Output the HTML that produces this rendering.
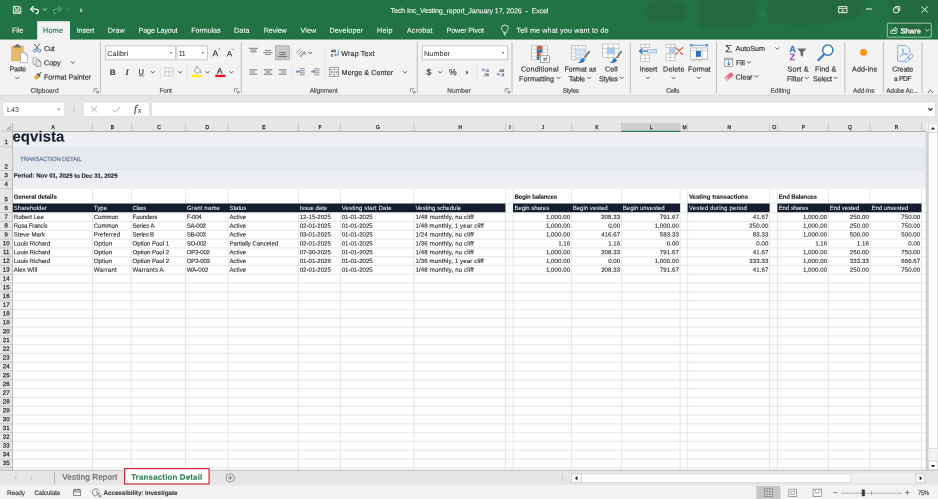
<!DOCTYPE html>
<html lang="en">
<head>
<meta charset="utf-8">
<title>Tech Inc_Vesting_report_January 17, 2026 - Excel</title>
<style>
html,body{margin:0;padding:0;background:#fff;}
body{width:938px;height:499px;overflow:hidden;position:relative;font-family:'Liberation Sans',sans-serif;color:#444;}
#app{position:absolute;left:0;top:0;width:938px;height:499px;overflow:hidden;background:#fff;}
#shapes{position:absolute;left:0;top:0;}
#labels{position:absolute;left:0;top:0;width:938px;height:499px;will-change:transform;}
#app span{position:absolute;left:0;top:0;white-space:pre;line-height:1;transform-origin:0 0;-webkit-text-stroke:0.2px;}
</style>
</head>
<body>
<div id="app">
<svg id="shapes" width="938" height="499" viewBox="0 0 938 499">
<!-- window chrome backgrounds -->
<rect x="0" y="0" width="938" height="39.6" fill="#217346"/>
<defs><filter id="bl" x="-20%" y="-40%" width="140%" height="180%"><feGaussianBlur stdDeviation="1.3"/></filter><clipPath id="tc"><rect x="0" y="0" width="938" height="39.6"/></clipPath></defs>
<g clip-path="url(#tc)"><g filter="url(#bl)" fill="#25673f" opacity="0.78"><rect x="646" y="1.5" width="40" height="20.5" rx="8"/><rect x="697" y="-4" width="59" height="33" rx="9"/><path d="M768 -3H866Q868 13 852 19Q830 26 800 25.5Q776 26 768 21Z"/><circle cx="916" cy="7" r="27"/></g><circle cx="762" cy="13" r="3.5" fill="#2b8251" opacity="0.6" filter="url(#bl)"/></g>
<rect x="0" y="38.7" width="938" height="0.9" fill="#1c6a3e"/>
<rect x="0" y="39.6" width="938" height="55.1" fill="#f3f3f3"/>
<rect x="0" y="94.7" width="938" height="28.2" fill="#e6e6e6"/>
<linearGradient id="sh" x1="0" y1="0" x2="0" y2="1"><stop offset="0" stop-color="#d9d9d9"/><stop offset="1" stop-color="#e6e6e6"/></linearGradient>
<rect x="0" y="94.7" width="938" height="2.6" fill="url(#sh)"/>
<rect x="0" y="122.9" width="938" height="347.4" fill="#fff"/>
<!-- worksheet -->
<rect x="12.5" y="131.3" width="913.8" height="57.5" fill="#edeff3"/>
<rect x="12.5" y="146.9" width="913.8" height="23.7" fill="#e5e8ec"/>
<rect x="12.5" y="202.75" width="913.8" height="1.3" fill="#ebebeb"/>
<rect x="12.5" y="212.05" width="913.8" height="1.3" fill="#ebebeb"/>
<rect x="12.5" y="220.85" width="913.8" height="1.3" fill="#ebebeb"/>
<rect x="12.5" y="229.64" width="913.8" height="1.3" fill="#ebebeb"/>
<rect x="12.5" y="238.44" width="913.8" height="1.3" fill="#ebebeb"/>
<rect x="12.5" y="247.24" width="913.8" height="1.3" fill="#ebebeb"/>
<rect x="12.5" y="256.04" width="913.8" height="1.3" fill="#ebebeb"/>
<rect x="12.5" y="264.83" width="913.8" height="1.3" fill="#ebebeb"/>
<rect x="12.5" y="273.63" width="913.8" height="1.3" fill="#ebebeb"/>
<rect x="12.5" y="282.43" width="913.8" height="1.3" fill="#ebebeb"/>
<rect x="12.5" y="291.22" width="913.8" height="1.3" fill="#ebebeb"/>
<rect x="12.5" y="300.02" width="913.8" height="1.3" fill="#ebebeb"/>
<rect x="12.5" y="308.82" width="913.8" height="1.3" fill="#ebebeb"/>
<rect x="12.5" y="317.61" width="913.8" height="1.3" fill="#ebebeb"/>
<rect x="12.5" y="326.41" width="913.8" height="1.3" fill="#ebebeb"/>
<rect x="12.5" y="335.21" width="913.8" height="1.3" fill="#ebebeb"/>
<rect x="12.5" y="344" width="913.8" height="1.3" fill="#ebebeb"/>
<rect x="12.5" y="352.8" width="913.8" height="1.3" fill="#ebebeb"/>
<rect x="12.5" y="361.6" width="913.8" height="1.3" fill="#ebebeb"/>
<rect x="12.5" y="370.4" width="913.8" height="1.3" fill="#ebebeb"/>
<rect x="12.5" y="379.19" width="913.8" height="1.3" fill="#ebebeb"/>
<rect x="12.5" y="387.99" width="913.8" height="1.3" fill="#ebebeb"/>
<rect x="12.5" y="396.79" width="913.8" height="1.3" fill="#ebebeb"/>
<rect x="12.5" y="405.58" width="913.8" height="1.3" fill="#ebebeb"/>
<rect x="12.5" y="414.38" width="913.8" height="1.3" fill="#ebebeb"/>
<rect x="12.5" y="423.18" width="913.8" height="1.3" fill="#ebebeb"/>
<rect x="12.5" y="431.98" width="913.8" height="1.3" fill="#ebebeb"/>
<rect x="12.5" y="440.77" width="913.8" height="1.3" fill="#ebebeb"/>
<rect x="12.5" y="449.57" width="913.8" height="1.3" fill="#ebebeb"/>
<rect x="12.5" y="458.37" width="913.8" height="1.3" fill="#ebebeb"/>
<rect x="12.5" y="467.16" width="913.8" height="1.3" fill="#ebebeb"/>
<rect x="92" y="188.8" width="1" height="281.5" fill="#e6e6e6"/>
<rect x="130.8" y="188.8" width="1" height="281.5" fill="#e6e6e6"/>
<rect x="184.9" y="188.8" width="1" height="281.5" fill="#e6e6e6"/>
<rect x="227.6" y="188.8" width="1" height="281.5" fill="#e6e6e6"/>
<rect x="297.9" y="188.8" width="1" height="281.5" fill="#e6e6e6"/>
<rect x="339.9" y="188.8" width="1" height="281.5" fill="#e6e6e6"/>
<rect x="413.6" y="188.8" width="1" height="281.5" fill="#e6e6e6"/>
<rect x="504.9" y="188.8" width="1" height="281.5" fill="#e6e6e6"/>
<rect x="512.6" y="188.8" width="1" height="281.5" fill="#e6e6e6"/>
<rect x="570.9" y="188.8" width="1" height="281.5" fill="#e6e6e6"/>
<rect x="620.9" y="188.8" width="1" height="281.5" fill="#e6e6e6"/>
<rect x="679.6" y="188.8" width="1" height="281.5" fill="#e6e6e6"/>
<rect x="687.1" y="188.8" width="1" height="281.5" fill="#e6e6e6"/>
<rect x="769.1" y="188.8" width="1" height="281.5" fill="#e6e6e6"/>
<rect x="776.9" y="188.8" width="1" height="281.5" fill="#e6e6e6"/>
<rect x="827.9" y="188.8" width="1" height="281.5" fill="#e6e6e6"/>
<rect x="869.6" y="188.8" width="1" height="281.5" fill="#e6e6e6"/>
<rect x="921" y="188.8" width="1" height="281.5" fill="#e6e6e6"/>
<rect x="12.5" y="203.55" width="492.9" height="8.65" fill="#141c2e"/>
<rect x="513.1" y="203.55" width="167" height="8.65" fill="#141c2e"/>
<rect x="687.6" y="203.55" width="82" height="8.65" fill="#141c2e"/>
<rect x="777.4" y="203.55" width="144.1" height="8.65" fill="#141c2e"/>
<rect x="0" y="122.9" width="926.3" height="8.4" fill="#e6e6e6"/>
<rect x="621.4" y="122.9" width="58.7" height="8.4" fill="#d0d0d0"/>
<rect x="0" y="131" width="926.3" height="1" fill="#ababab"/>
<rect x="621.4" y="130.8" width="58.7" height="1.2" fill="#2a7a4d"/>
<rect x="92.2" y="122.7" width="0.6" height="8.6" fill="#bcbcbc"/>
<rect x="131" y="122.7" width="0.6" height="8.6" fill="#bcbcbc"/>
<rect x="185.1" y="122.7" width="0.6" height="8.6" fill="#bcbcbc"/>
<rect x="227.8" y="122.7" width="0.6" height="8.6" fill="#bcbcbc"/>
<rect x="298.1" y="122.7" width="0.6" height="8.6" fill="#bcbcbc"/>
<rect x="340.1" y="122.7" width="0.6" height="8.6" fill="#bcbcbc"/>
<rect x="413.8" y="122.7" width="0.6" height="8.6" fill="#bcbcbc"/>
<rect x="505.1" y="122.7" width="0.6" height="8.6" fill="#bcbcbc"/>
<rect x="512.8" y="122.7" width="0.6" height="8.6" fill="#bcbcbc"/>
<rect x="571.1" y="122.7" width="0.6" height="8.6" fill="#bcbcbc"/>
<rect x="621.1" y="122.7" width="0.6" height="8.6" fill="#bcbcbc"/>
<rect x="679.8" y="122.7" width="0.6" height="8.6" fill="#bcbcbc"/>
<rect x="687.3" y="122.7" width="0.6" height="8.6" fill="#bcbcbc"/>
<rect x="769.3" y="122.7" width="0.6" height="8.6" fill="#bcbcbc"/>
<rect x="777.1" y="122.7" width="0.6" height="8.6" fill="#bcbcbc"/>
<rect x="828.1" y="122.7" width="0.6" height="8.6" fill="#bcbcbc"/>
<rect x="869.8" y="122.7" width="0.6" height="8.6" fill="#bcbcbc"/>
<rect x="921.2" y="122.7" width="0.6" height="8.6" fill="#bcbcbc"/>
<path d="M10.9 124.9V130.2H5.4Z" fill="#b9b9b9"/>
<rect x="0" y="131.3" width="12.5" height="339" fill="#e6e6e6"/>
<rect x="12.05" y="122.9" width="0.7" height="347.4" fill="#a8a8a8"/>
<rect x="0" y="146.6" width="12.5" height="0.6" fill="#b5b5b5"/>
<rect x="0" y="170.3" width="12.5" height="0.6" fill="#b5b5b5"/>
<rect x="0" y="179.6" width="12.5" height="0.6" fill="#b5b5b5"/>
<rect x="0" y="188.5" width="12.5" height="0.6" fill="#b5b5b5"/>
<rect x="0" y="203.1" width="12.5" height="0.6" fill="#b5b5b5"/>
<rect x="0" y="212.4" width="12.5" height="0.6" fill="#b5b5b5"/>
<rect x="0" y="221.2" width="12.5" height="0.6" fill="#b5b5b5"/>
<rect x="0" y="229.99" width="12.5" height="0.6" fill="#b5b5b5"/>
<rect x="0" y="238.79" width="12.5" height="0.6" fill="#b5b5b5"/>
<rect x="0" y="247.59" width="12.5" height="0.6" fill="#b5b5b5"/>
<rect x="0" y="256.38" width="12.5" height="0.6" fill="#b5b5b5"/>
<rect x="0" y="265.18" width="12.5" height="0.6" fill="#b5b5b5"/>
<rect x="0" y="273.98" width="12.5" height="0.6" fill="#b5b5b5"/>
<rect x="0" y="282.78" width="12.5" height="0.6" fill="#b5b5b5"/>
<rect x="0" y="291.57" width="12.5" height="0.6" fill="#b5b5b5"/>
<rect x="0" y="300.37" width="12.5" height="0.6" fill="#b5b5b5"/>
<rect x="0" y="309.17" width="12.5" height="0.6" fill="#b5b5b5"/>
<rect x="0" y="317.96" width="12.5" height="0.6" fill="#b5b5b5"/>
<rect x="0" y="326.76" width="12.5" height="0.6" fill="#b5b5b5"/>
<rect x="0" y="335.56" width="12.5" height="0.6" fill="#b5b5b5"/>
<rect x="0" y="344.35" width="12.5" height="0.6" fill="#b5b5b5"/>
<rect x="0" y="353.15" width="12.5" height="0.6" fill="#b5b5b5"/>
<rect x="0" y="361.95" width="12.5" height="0.6" fill="#b5b5b5"/>
<rect x="0" y="370.75" width="12.5" height="0.6" fill="#b5b5b5"/>
<rect x="0" y="379.54" width="12.5" height="0.6" fill="#b5b5b5"/>
<rect x="0" y="388.34" width="12.5" height="0.6" fill="#b5b5b5"/>
<rect x="0" y="397.14" width="12.5" height="0.6" fill="#b5b5b5"/>
<rect x="0" y="405.93" width="12.5" height="0.6" fill="#b5b5b5"/>
<rect x="0" y="414.73" width="12.5" height="0.6" fill="#b5b5b5"/>
<rect x="0" y="423.53" width="12.5" height="0.6" fill="#b5b5b5"/>
<rect x="0" y="432.32" width="12.5" height="0.6" fill="#b5b5b5"/>
<rect x="0" y="441.12" width="12.5" height="0.6" fill="#b5b5b5"/>
<rect x="0" y="449.92" width="12.5" height="0.6" fill="#b5b5b5"/>
<rect x="0" y="458.72" width="12.5" height="0.6" fill="#b5b5b5"/>
<rect x="0" y="467.51" width="12.5" height="0.6" fill="#b5b5b5"/>
<!-- scrollbars -->
<rect x="926.3" y="122.9" width="11.7" height="347.4" fill="#f0f0f0"/>
<rect x="925.7" y="131.3" width="2.5" height="339" fill="#d0d0d0"/>
<rect x="928.3" y="132.4" width="9.1" height="316.3" fill="#fff" stroke="#c9c9c9" stroke-width="0.6"/>
<rect x="928.6" y="123.9" width="8.8" height="8.3" fill="#fff" stroke="#c4c4c4" stroke-width="0.6"/>
<path d="M930.8 129.4L933 126.9L935.2 129.4Z" fill="#1e1e1e"/>
<rect x="928.6" y="461.1" width="8.8" height="8.9" fill="#fff" stroke="#c4c4c4" stroke-width="0.6"/>
<path d="M930.8 464.9L933 467.4L935.2 464.9Z" fill="#1e1e1e"/>
<rect x="0" y="469.9" width="938" height="0.8" fill="#bdbdbd"/>
<!-- title bar -->
<!-- ribbon tabs -->
<rect x="37.2" y="21.2" width="32.8" height="18.9" fill="#f3f3f3"/>
<rect x="887.3" y="23.2" width="44" height="14" fill="none" rx="0.6" stroke="#bcd6c6" stroke-width="0.8"/>
<!-- ribbon -->
<rect x="99.9" y="41.9" width="1" height="51.2" fill="#bebebe"/>
<rect x="240.8" y="41.9" width="1" height="51.2" fill="#bebebe"/>
<rect x="416.8" y="41.9" width="1" height="51.2" fill="#bebebe"/>
<rect x="511.5" y="41.9" width="1" height="51.2" fill="#bebebe"/>
<rect x="629.8" y="41.9" width="1" height="51.2" fill="#bebebe"/>
<rect x="716" y="41.9" width="1" height="51.2" fill="#bebebe"/>
<rect x="844.3" y="41.9" width="1" height="51.2" fill="#bebebe"/>
<rect x="882.8" y="41.9" width="1" height="51.2" fill="#bebebe"/>
<rect x="921.5" y="41.9" width="1" height="51.2" fill="#bebebe"/>
<rect x="159.95" y="65.6" width="0.7" height="13.2" fill="#dcdcdc"/>
<rect x="187.15" y="65.6" width="0.7" height="13.2" fill="#dcdcdc"/>
<rect x="291.55" y="46" width="0.7" height="13.5" fill="#dcdcdc"/>
<rect x="291.55" y="65.6" width="0.7" height="13.2" fill="#dcdcdc"/>
<rect x="324.65" y="45.6" width="0.7" height="33.2" fill="#dcdcdc"/>
<rect x="476.15" y="65.6" width="0.7" height="13.2" fill="#dcdcdc"/>
<rect x="105.6" y="45.9" width="69.8" height="13.85" fill="#fff" stroke="#bdbdbd" stroke-width="0.85"/>
<rect x="176.9" y="45.9" width="30.6" height="13.85" fill="#fff" stroke="#bdbdbd" stroke-width="0.85"/>
<rect x="422.25" y="45.9" width="85.5" height="13.85" fill="#fff" stroke="#bdbdbd" stroke-width="0.85"/>
<rect x="138.7" y="75.6" width="5.6" height="0.6" fill="#3a3a3a"/>
<!-- formula bar -->
<rect x="3.1" y="102.1" width="61.6" height="14.2" fill="#fff" stroke="#d6d6d6" stroke-width="0.6"/>
<rect x="83.3" y="102.1" width="66" height="14.2" fill="#fff" stroke="#d6d6d6" stroke-width="0.6"/>
<rect x="151.3" y="102.1" width="784" height="14.2" fill="#fff" stroke="#d6d6d6" stroke-width="0.6"/>
<!-- sheet tabs -->
<rect x="0" y="470.3" width="938" height="15.4" fill="#e6e6e6"/>
<rect x="0" y="469.9" width="938" height="0.8" fill="#bdbdbd"/>
<rect x="54.25" y="472" width="0.7" height="11.6" fill="#9e9e9e"/>
<rect x="124.65" y="468.65" width="84.4" height="15.3" fill="#fff" stroke="#cf1f2e" stroke-width="1.15"/>
<rect x="581.2" y="473.6" width="334.7" height="9.2" fill="#f0f0f0"/>
<rect x="571.6" y="473.9" width="9.6" height="8.6" fill="#fff" stroke="#b9b9b9" stroke-width="0.6"/>
<rect x="581.6" y="473.9" width="269.2" height="8.6" fill="#fff" stroke="#c9c9c9" stroke-width="0.6"/>
<rect x="915.9" y="473.9" width="8.8" height="8.6" fill="#fff" stroke="#b9b9b9" stroke-width="0.6"/>
<path d="M577.5 475.9L574.9 478.2L577.5 480.5Z" fill="#1e1e1e"/>
<path d="M919.6 475.9L922.2 478.2L919.6 480.5Z" fill="#1e1e1e"/>
<!-- status bar -->
<rect x="0" y="485.7" width="938" height="13.3" fill="#f3f3f3"/>
<rect x="756.3" y="486" width="24.1" height="13" fill="#c6c6c6"/>
<!-- icons -->
<g fill="none" stroke="#fff" stroke-width="0.9" stroke-linejoin="round"><path d="M13.4 6.4H19.6L20.8 7.6V13.3H13.4Z"/><path d="M15.1 6.5V9.1H19V6.5"/><path d="M15.1 13.2V10.9H19.2V13.2"/><path d="M16.3 12.1H18" stroke-width="0.7"/></g>
<g fill="none" stroke="#fff" stroke-width="1.15" stroke-linecap="round" stroke-linejoin="round"><path d="M33.3 6.5L30.6 9.1L33.3 11.6"/><path d="M30.9 9.1H35.6C39.2 9.1 39.4 13.4 35.9 13.5"/></g>
<path d="M43.30 8.80L44.80 10.40L46.30 8.80" fill="none" stroke="#fff" stroke-width="0.8" stroke-linecap="round" stroke-linejoin="round"/>
<g fill="none" stroke="#5e9b79" stroke-width="1.15" stroke-linecap="round" stroke-linejoin="round"><path d="M58.7 6.5L61.4 9.1L58.7 11.6"/><path d="M61.1 9.1H56.4C52.8 9.1 52.6 13.4 56.1 13.5"/></g>
<path d="M66.90 8.80L68.40 10.40L69.90 8.80" fill="none" stroke="#5e9b79" stroke-width="0.8" stroke-linecap="round" stroke-linejoin="round"/>
<path d="M79.9 9.2H82.3" fill="none" stroke="#fff" stroke-width="0.7"/>
<path d="M79.7 10.5H82.5L81.1 12.3Z" fill="#fff"/>
<g fill="none" stroke="#fff" stroke-width="0.9"><rect x="838.7" y="6.7" width="8.2" height="6"/><path d="M838.7 8.5H846.9" stroke-width="0.7"/><path d="M841.2 11.2L842.8 9.7L844.4 11.2M842.8 9.9V12.6" stroke-width="0.7"/><path d="M865.8 9H872" stroke-width="0.95"/><rect x="893.7" y="7.9" width="4.7" height="4.7" rx="0.8"/><path d="M895.3 7.7V6.9Q895.3 6.5 895.8 6.5H899.2Q899.8 6.5 899.8 7.1V10.4Q899.8 11 899.2 11H898.6"/><path d="M921.5 6.3L927.9 12.7M927.9 6.3L921.5 12.7" stroke-width="0.95"/></g>
<g fill="none" stroke="#fff" stroke-width="0.8" stroke-linejoin="round"><path d="M503.4 32.3C503.3 30.9 501.5 30.2 501.5 28.4A3.4 3.4 0 0 1 508.3 28.4C508.3 30.2 506.5 30.9 506.4 32.3Z"/><path d="M503.5 33.7H506.3M504 35.1H505.8"/></g>
<g fill="none" stroke="#fff" stroke-width="0.8" stroke-linejoin="round"><path d="M893.4 30.2H891.6Q890.6 30.3 890.6 31.2V32.5Q890.6 33.4 891.6 33.4H895.8Q896.8 33.4 896.8 32.5V31.4"/><path d="M892.4 31.6C892.6 29.6 893.8 28.8 895.3 28.8V27.5L897.4 29.5L895.3 31.4V30.2C894.2 30.2 893.2 30.5 892.4 31.6Z"/></g>
<path d="M925.80 29.60L927.30 31.20L928.80 29.60" fill="none" stroke="#fff" stroke-width="0.8" stroke-linecap="round" stroke-linejoin="round"/>
<g><rect x="11" y="45.8" width="12.8" height="15.5" rx="0.8" fill="#e9b867"/><path d="M13.9 47.4V46.1Q13.9 45.4 14.7 45.4H15.9Q16.2 44.1 17.4 44.1Q18.6 44.1 18.9 45.4H20.1Q20.9 45.4 20.9 46.1V47.4Z" fill="#6d6d6d"/><path d="M20.5 52.5H25.4L27.6 54.7V62.6H20.5Z" fill="#fff" stroke="#8a8a8a" stroke-width="0.6"/><path d="M25.3 52.6V54.9H27.5" fill="none" stroke="#8a8a8a" stroke-width="0.6"/></g>
<path d="M15.70 77.15L17.30 78.85L18.90 77.15" fill="none" stroke="#444" stroke-width="0.85" stroke-linecap="round" stroke-linejoin="round"/>
<g fill="none" stroke-linecap="round"><path d="M34.3 44.1L38.6 49.8M39.6 44.1L35.2 49.8" stroke="#4f4f4f" stroke-width="0.9"/><circle cx="34.7" cy="50.7" r="1.55" stroke="#4d82c4" stroke-width="0.8"/><circle cx="39.2" cy="50.7" r="1.55" stroke="#4d82c4" stroke-width="0.8"/></g>
<g stroke="#7b7b7b" stroke-width="0.65" stroke-linejoin="round"><path d="M33.1 57.8H36.4L37.9 59.3V64.3H33.1Z" fill="#fafafa"/><path d="M35.9 60H39.2L40.8 61.6V66.4H35.9Z" fill="#dbe8f6"/><path d="M39.1 60.1V61.7H40.7" fill="none"/></g>
<path d="M71.20 61.75L72.80 63.45L74.40 61.75" fill="none" stroke="#444" stroke-width="0.85" stroke-linecap="round" stroke-linejoin="round"/>
<g><path d="M33.6 77.4L36.2 74.7L39 77.5L36.4 80.1Z" fill="#eaa93a"/><path d="M36.4 74.3L37.7 73L40.7 76L39.4 77.3Z" fill="#555"/><path d="M38.6 74.6L40.9 72.7" stroke="#555" stroke-width="1.1" stroke-linecap="round"/></g>
<path d="M97.80 88.70H93.90V92.30" fill="none" stroke="#5a5a5a" stroke-width="0.6"/>
<path d="M95.60 90.30L98.20 92.70M98.40 90.80V92.80H96.40" fill="none" stroke="#5a5a5a" stroke-width="0.7"/>
<path d="M169.60 52.20H172.40L171.00 53.80Z" fill="#555"/>
<path d="M201.50 52.20H204.30L202.90 53.80Z" fill="#555"/>
<path d="M501.70 52.20H504.50L503.10 53.80Z" fill="#555"/>
<path d="M218.1 49.7L219.3 48.4L220.5 49.7" fill="none" stroke="#3b7dc4" stroke-width="0.7"/>
<path d="M231.7 48.5L232.9 49.8L234.1 48.5" fill="none" stroke="#3b7dc4" stroke-width="0.7"/>
<path d="M151.20 71.45L152.80 73.15L154.40 71.45" fill="none" stroke="#444" stroke-width="0.85" stroke-linecap="round" stroke-linejoin="round"/>
<path d="M178.70 71.45L180.30 73.15L181.90 71.45" fill="none" stroke="#444" stroke-width="0.85" stroke-linecap="round" stroke-linejoin="round"/>
<path d="M205.90 71.45L207.50 73.15L209.10 71.45" fill="none" stroke="#444" stroke-width="0.85" stroke-linecap="round" stroke-linejoin="round"/>
<path d="M229.70 71.45L231.30 73.15L232.90 71.45" fill="none" stroke="#444" stroke-width="0.85" stroke-linecap="round" stroke-linejoin="round"/>
<g fill="none" stroke="#9d9d9d" stroke-width="0.65" stroke-dasharray="1 0.9"><rect x="164.8" y="67.6" width="8.6" height="8.4"/><path d="M169.1 67.6V76M164.8 71.8H173.4"/></g>
<g><path d="M194.1 70.4L197.4 67.2L200.7 70.5L197.3 73.8Z" fill="#fff" stroke="#666" stroke-width="0.7" stroke-linejoin="round"/><path d="M196.2 68.3V66.9Q196.3 66.1 197.1 66.2" fill="none" stroke="#666" stroke-width="0.6"/><path d="M200.9 70.8Q202.1 72.5 201 73.2Q199.9 72.6 200.9 70.8Z" fill="#3b7dc4"/><rect x="191.9" y="74.7" width="9.6" height="2.4" fill="#ffe919"/></g>
<rect x="215.3" y="74.7" width="10.1" height="2.4" fill="#e4141c"/>
<path d="M238.40 88.70H234.50V92.30" fill="none" stroke="#5a5a5a" stroke-width="0.6"/>
<path d="M236.20 90.30L238.80 92.70M239.00 90.80V92.80H237.00" fill="none" stroke="#5a5a5a" stroke-width="0.7"/>
<rect x="248.8" y="47.82" width="9.3" height="0.95" fill="#7d7d7d"/>
<rect x="250.35" y="49.62" width="6.2" height="0.95" fill="#7d7d7d"/>
<rect x="250.35" y="51.42" width="6.2" height="0.95" fill="#7d7d7d"/>
<rect x="264.75" y="49.92" width="6.2" height="0.95" fill="#7d7d7d"/>
<rect x="263.2" y="51.92" width="9.3" height="0.95" fill="#7d7d7d"/>
<rect x="264.75" y="53.92" width="6.2" height="0.95" fill="#7d7d7d"/>
<rect x="275.5" y="45.8" width="14.1" height="14" fill="#c8c8c8" stroke="#a3a3a3" stroke-width="0.7"/>
<rect x="279.45" y="52.12" width="6.2" height="0.95" fill="#6c6c6c"/>
<rect x="279.45" y="54.12" width="6.2" height="0.95" fill="#6c6c6c"/>
<rect x="277.9" y="56.12" width="9.3" height="0.95" fill="#6c6c6c"/>
<g fill="none" stroke="#6a6a6a" stroke-width="0.75" stroke-linecap="round"><path d="M296.6 52.6L300.4 48.9M298.4 54.4L302.2 50.7M300.2 56.2L303 53.5"/><path d="M300.6 56.8L304.9 52.4M304.9 52.4H302.8M304.9 52.4V54.5"/></g>
<path d="M308.60 52.15L310.20 53.85L311.80 52.15" fill="none" stroke="#444" stroke-width="0.85" stroke-linecap="round" stroke-linejoin="round"/>
<rect x="249.6" y="69.25" width="7.6" height="1.1" fill="#7d7d7d"/>
<rect x="249.6" y="71.45" width="5.2" height="1.1" fill="#7d7d7d"/>
<rect x="249.6" y="73.65" width="7.6" height="1.1" fill="#7d7d7d"/>
<rect x="263.9" y="69.25" width="8.4" height="1.1" fill="#7d7d7d"/>
<rect x="265.4" y="71.45" width="5.4" height="1.1" fill="#7d7d7d"/>
<rect x="263.9" y="73.65" width="8.4" height="1.1" fill="#7d7d7d"/>
<rect x="278.7" y="69.25" width="7.6" height="1.1" fill="#7d7d7d"/>
<rect x="281.1" y="71.45" width="5.2" height="1.1" fill="#7d7d7d"/>
<rect x="278.7" y="73.65" width="7.6" height="1.1" fill="#7d7d7d"/>
<rect x="299.7" y="68.15" width="5.1" height="1.1" fill="#9a9a9a"/>
<rect x="299.7" y="70.15" width="5.1" height="1.1" fill="#9a9a9a"/>
<rect x="299.7" y="72.15" width="5.1" height="1.1" fill="#9a9a9a"/>
<rect x="299.7" y="74.15" width="5.1" height="1.1" fill="#9a9a9a"/>
<path d="M300.2 71.7H296.7M298.2 70.1L296.5 71.7L298.2 73.3" fill="none" stroke="#2f74c0" stroke-width="0.9"/>
<rect x="314.4" y="68.15" width="5.1" height="1.1" fill="#9a9a9a"/>
<rect x="314.4" y="70.15" width="5.1" height="1.1" fill="#9a9a9a"/>
<rect x="314.4" y="72.15" width="5.1" height="1.1" fill="#9a9a9a"/>
<rect x="314.4" y="74.15" width="5.1" height="1.1" fill="#9a9a9a"/>
<path d="M311.1 71.7H314.6M313.1 70.1L314.8 71.7L313.1 73.3" fill="none" stroke="#2f74c0" stroke-width="0.9"/>
<path d="M338.3 50.4V54.9H334.6M335.9 53.6L334.5 54.9L335.9 56.2" fill="none" stroke="#2f74c0" stroke-width="0.75"/>
<g fill="none"><rect x="329.8" y="67.3" width="8.9" height="9.3" fill="#fff" stroke="#7b7b7b" stroke-width="0.7"/><path d="M329.8 69.6H338.7M329.8 74.3H338.7M334.2 67.3V69.6M334.2 74.3V76.6" stroke="#7b7b7b" stroke-width="0.6"/><path d="M331 72H337.5M332 71L331 72L332 73M336.5 71L337.5 72L336.5 73" stroke="#2f74c0" stroke-width="0.7"/></g>
<path d="M403.40 71.45L405.00 73.15L406.60 71.45" fill="none" stroke="#444" stroke-width="0.85" stroke-linecap="round" stroke-linejoin="round"/>
<path d="M414.40 88.70H410.50V92.30" fill="none" stroke="#5a5a5a" stroke-width="0.6"/>
<path d="M412.20 90.30L414.80 92.70M415.00 90.80V92.80H413.00" fill="none" stroke="#5a5a5a" stroke-width="0.7"/>
<path d="M438.70 71.45L440.30 73.15L441.90 71.45" fill="none" stroke="#444" stroke-width="0.85" stroke-linecap="round" stroke-linejoin="round"/>
<path d="M485.4 69.9H482.4M483.6 68.8L482.3 69.9L483.6 71.0" fill="none" stroke="#2f74c0" stroke-width="0.8"/>
<path d="M500.3 74.3H497.3M498.5 73.2L497.2 74.3L498.5 75.4" fill="none" stroke="#2f74c0" stroke-width="0.8"/>
<path d="M509.10 88.70H505.20V92.30" fill="none" stroke="#5a5a5a" stroke-width="0.6"/>
<path d="M506.90 90.30L509.50 92.70M509.70 90.80V92.80H507.70" fill="none" stroke="#5a5a5a" stroke-width="0.7"/>
<rect x="531.4" y="45.8" width="16.3" height="14" fill="#fff" stroke="#a7a7a7" stroke-width="0.6"/>
<path d="M536.83 45.80V59.80M542.27 45.80V59.80M531.40 49.30H547.70M531.40 52.80H547.70M531.40 56.30H547.70" fill="none" stroke="#a7a7a7" stroke-width="0.54"/>
<rect x="536.9" y="45.9" width="5.3" height="3.4" fill="#d9552f"/>
<rect x="536.9" y="49.4" width="5.3" height="3.4" fill="#2e75b6"/>
<rect x="536.9" y="52.9" width="3.6" height="3.4" fill="#d9552f"/>
<rect x="536.9" y="56.4" width="2.6" height="3.3" fill="#2e75b6"/>
<rect x="540.6" y="55.8" width="9" height="6.6" fill="#fff" stroke="#7d7d7d" stroke-width="0.7"/>
<path d="M543 58.4H547.3M543 60.1H547.3M546.6 57L543.8 61.4" fill="none" stroke="#444" stroke-width="0.6"/>
<path d="M557.00 77.15L558.60 78.85L560.20 77.15" fill="none" stroke="#444" stroke-width="0.85" stroke-linecap="round" stroke-linejoin="round"/>
<rect x="571.5" y="45.5" width="14.4" height="14.4" fill="#fff" stroke="#a7a7a7" stroke-width="0.6"/>
<path d="M575.10 45.50V59.90M578.70 45.50V59.90M582.30 45.50V59.90M571.50 49.10H585.90M571.50 52.70H585.90M571.50 56.30H585.90" fill="none" stroke="#a7a7a7" stroke-width="0.54"/>
<rect x="575.2" y="49.2" width="10.6" height="10.6" fill="#bcd6f0" opacity="0.9"/>
<path d="M575.1 52.7H585.9M575.1 56.3H585.9M578.7 49.1V59.9M582.3 49.1V59.9" fill="none" stroke="#fff" stroke-width="0.6"/>
<path d="M585 57.2L589.3 51.6" fill="none" stroke="#6e6e6e" stroke-width="1.7" stroke-linecap="round"/>
<path d="M576.9 62.8Q580 62.6 580.9 59.4Q582.5 57.4 584.3 58.9Q585.6 60.6 583.7 62.1Q581.3 63.5 576.9 62.8Z" fill="#2e75b6"/>
<path d="M587.50 77.15L589.10 78.85L590.70 77.15" fill="none" stroke="#444" stroke-width="0.85" stroke-linecap="round" stroke-linejoin="round"/>
<rect x="602.7" y="44" width="16.2" height="13.6" fill="#fff" stroke="#a7a7a7" stroke-width="0.6"/>
<path d="M608.10 44.00V57.60M613.50 44.00V57.60M602.70 48.53H618.90M602.70 53.07H618.90" fill="none" stroke="#a7a7a7" stroke-width="0.54"/>
<rect x="606.7" y="47.3" width="8.3" height="6.9" fill="#a9caec"/>
<path d="M617 57.2L621.3 51.6" fill="none" stroke="#6e6e6e" stroke-width="1.7" stroke-linecap="round"/>
<path d="M608.9 62.8Q612 62.6 612.9 59.4Q614.5 57.4 616.3 58.9Q617.6 60.6 615.7 62.1Q613.3 63.5 608.9 62.8Z" fill="#2e75b6"/>
<path d="M620.00 77.15L621.60 78.85L623.20 77.15" fill="none" stroke="#444" stroke-width="0.85" stroke-linecap="round" stroke-linejoin="round"/>
<rect x="640.7" y="44.2" width="9" height="3.4" fill="#fff" stroke="#a7a7a7" stroke-width="0.6"/>
<path d="M645.20 44.20V47.60" fill="none" stroke="#a7a7a7" stroke-width="0.54"/>
<rect x="640.7" y="55" width="9" height="6.6" fill="#fff" stroke="#a7a7a7" stroke-width="0.6"/>
<path d="M645.20 55.00V61.60M640.70 58.30H649.70" fill="none" stroke="#a7a7a7" stroke-width="0.54"/>
<rect x="647.3" y="49.4" width="9.4" height="3.6" fill="#cfe0f3" stroke="#8fb4dd" stroke-width="0.6"/>
<path d="M647.6 51.2H640M642.5 48.6L639.6 51.2L642.5 53.8" fill="none" stroke="#2f74c0" stroke-width="1.3" stroke-linejoin="round"/>
<path d="M646.20 77.15L647.80 78.85L649.40 77.15" fill="none" stroke="#444" stroke-width="0.85" stroke-linecap="round" stroke-linejoin="round"/>
<rect x="666" y="44.2" width="9" height="3.4" fill="#fff" stroke="#a7a7a7" stroke-width="0.6"/>
<path d="M670.50 44.20V47.60" fill="none" stroke="#a7a7a7" stroke-width="0.54"/>
<rect x="666" y="54" width="9" height="6.8" fill="#fff" stroke="#a7a7a7" stroke-width="0.6"/>
<path d="M670.50 54.00V60.80M666.00 57.40H675.00" fill="none" stroke="#a7a7a7" stroke-width="0.54"/>
<rect x="669.4" y="48.9" width="5.4" height="3.6" fill="#b5d0ee" stroke="#8fb4dd" stroke-width="0.6"/>
<path d="M675.4 47.6L682.6 54.4M682.6 47.6L675.4 54.4" fill="none" stroke="#d9552f" stroke-width="1.15" stroke-linecap="round"/>
<path d="M671.90 77.15L673.50 78.85L675.10 77.15" fill="none" stroke="#444" stroke-width="0.85" stroke-linecap="round" stroke-linejoin="round"/>
<path d="M691 45.3H707.3M692.8 44.1L691 45.3L692.8 46.5M705.5 44.1L707.3 45.3L705.5 46.5M690.6 43.8V46.8M707.7 43.8V46.8" fill="none" stroke="#2f74c0" stroke-width="0.7"/>
<rect x="690.7" y="48" width="17" height="11.4" fill="#fff" stroke="#9a9a9a" stroke-width="0.6"/>
<path d="M696.37 48.00V59.40M702.03 48.00V59.40" fill="none" stroke="#9a9a9a" stroke-width="0.54"/>
<rect x="696" y="50.9" width="4.9" height="5.9" fill="#2e75b6"/>
<path d="M690.7 50.6H707.7M691.5 60.9H696.5M698 60.9H702.5" fill="none" stroke="#b0b0b0" stroke-width="0.6"/>
<path d="M697.20 77.15L698.80 78.85L700.40 77.15" fill="none" stroke="#444" stroke-width="0.85" stroke-linecap="round" stroke-linejoin="round"/>
<path d="M775.70 47.75L777.30 49.45L778.90 47.75" fill="none" stroke="#444" stroke-width="0.85" stroke-linecap="round" stroke-linejoin="round"/>
<rect x="724.8" y="58.2" width="7.8" height="8.4" fill="#fff" stroke="#7b7b7b" stroke-width="0.7"/>
<path d="M724.8 59.6H732.6" fill="none" stroke="#7b7b7b" stroke-width="0.7"/>
<path d="M728.7 60.6V65.2M726.9 63.4L728.7 65.3L730.5 63.4" fill="none" stroke="#2f74c0" stroke-width="0.95"/>
<path d="M747.40 61.55L749.00 63.25L750.60 61.55" fill="none" stroke="#444" stroke-width="0.85" stroke-linecap="round" stroke-linejoin="round"/>
<g transform="rotate(-38 729 76.4)"><rect x="724.6" y="74.3" width="8.8" height="4.3" rx="0.7" fill="#e86b8a"/><rect x="724.6" y="74.3" width="2.9" height="4.3" rx="0.7" fill="#f3a9bb"/></g>
<path d="M754.90 75.55L756.50 77.25L758.10 75.55" fill="none" stroke="#444" stroke-width="0.85" stroke-linecap="round" stroke-linejoin="round"/>
<path d="M797.3 48.4H806.4L803.1 52.2V56.7L800.6 55.4V52.2Z" fill="#6b6b6b"/>
<path d="M805.30 77.15L806.90 78.85L808.50 77.15" fill="none" stroke="#444" stroke-width="0.85" stroke-linecap="round" stroke-linejoin="round"/>
<path d="M834.00 77.15L835.60 78.85L837.20 77.15" fill="none" stroke="#444" stroke-width="0.85" stroke-linecap="round" stroke-linejoin="round"/>
<g fill="none" stroke="#3a7cc2" stroke-linecap="round"><circle cx="827.8" cy="50.2" r="5.1" stroke-width="1.5" fill="#fff"/><path d="M824.2 54.2L818.4 60.3" stroke-width="2.1"/></g>
<circle cx="863.5" cy="52.3" r="3.35" fill="#ff8d07"/>
<g fill="none" stroke="#6d9fdc" stroke-width="0.85" stroke-linejoin="round"><path d="M904.3 61.3H899.2Q897.7 61.3 897.7 59.8V46.9Q897.7 45.4 899.2 45.4H905.8L909.9 49.5V53.4"/><path d="M900.4 56.6C902.4 54.6 903.6 51.5 903.4 49.4C903.2 48.2 902 48.4 902.2 49.7C902.6 52.1 904.9 54.5 907 54.9C908.3 55.1 908.3 53.8 907 53.7C904.8 53.6 902.3 54.6 900.6 56C899.7 56.9 900 57.4 900.4 56.6Z" stroke-width="0.7"/><rect x="-3" y="-1.5" width="6" height="3" rx="1.5" transform="translate(907.3 59.9) rotate(-45)"/><rect x="-3" y="-1.5" width="6" height="3" rx="1.5" transform="translate(910.4 56.8) rotate(-45)"/></g>
<path d="M928.10 92.55L930.40 90.25L932.70 92.55" fill="none" stroke="#444" stroke-width="0.9" stroke-linecap="round" stroke-linejoin="round"/>
<path d="M57.40 108.70H60.20L58.80 110.30Z" fill="#555"/>
<rect x="73.7" y="106.4" width="0.9" height="0.9" fill="#8a8a8a"/>
<rect x="73.7" y="108.9" width="0.9" height="0.9" fill="#8a8a8a"/>
<rect x="73.7" y="111.4" width="0.9" height="0.9" fill="#8a8a8a"/>
<path d="M90.9 106.5L97.2 112.4M97.2 106.5L90.9 112.4" fill="none" stroke="#a0a0a0" stroke-width="0.85"/>
<path d="M112.9 109.6L115.3 112.3L120.2 106.4" fill="none" stroke="#a0a0a0" stroke-width="0.85"/>
<path d="M928.70 108.45L930.50 110.35L932.30 108.45" fill="none" stroke="#333" stroke-width="1.15" stroke-linecap="round" stroke-linejoin="round"/>
<path d="M16.6 476.1L14.6 477.9L16.6 479.7" fill="none" stroke="#b5b5b5" stroke-width="0.8"/>
<path d="M30.4 476.1L32.4 477.9L30.4 479.7" fill="none" stroke="#b5b5b5" stroke-width="0.8"/>
<g fill="none" stroke="#6f6f6f"><circle cx="230.2" cy="477.9" r="4.1" stroke-width="0.7"/><path d="M227.9 477.9H232.5M230.2 475.6V480.2" stroke-width="0.8"/></g>
<rect x="562.2" y="475.4" width="0.8" height="0.8" fill="#8e8e8e"/>
<rect x="562.2" y="477.6" width="0.8" height="0.8" fill="#8e8e8e"/>
<rect x="562.2" y="479.8" width="0.8" height="0.8" fill="#8e8e8e"/>
<g fill="none" stroke="#555" stroke-width="0.7"><rect x="73.7" y="489.9" width="6.6" height="5.8"/><path d="M73.7 491.8H80.3" /><circle cx="75" cy="489.6" r="0.9" fill="#555" stroke="none"/><path d="M77.3 489.5H80.3" stroke-width="1.1"/></g>
<g fill="none" stroke="#444" stroke-width="0.7" stroke-linecap="round"><path d="M95.5 496A3.6 3.6 0 1 1 99.4 491.4" stroke-dasharray="1.6 1"/><path d="M96.4 491.3L97.6 493.4L96.8 495.4M97.6 493.4L99.6 493.2M98.6 494.8L101 497.3M101 494.8L98.6 497.3"/></g>
<rect x="764.6" y="489" width="7.8" height="7.7" fill="#dcdcdc" stroke="#7a7a7a" stroke-width="0.7"/>
<path d="M767.20 489.00V496.70M769.80 489.00V496.70M764.60 491.57H772.40M764.60 494.13H772.40" fill="none" stroke="#7a7a7a" stroke-width="0.63"/>
<g fill="none" stroke="#7a7a7a" stroke-width="0.7"><rect x="788.8" y="489.2" width="7.9" height="7.4" fill="#f8f8f8"/><rect x="790.9" y="491.3" width="3.7" height="3.2" stroke-width="0.6"/><rect x="813.1" y="489.2" width="8.2" height="7.4" fill="#f8f8f8"/><path d="M815.4 489.2V493H819V489.2" stroke-width="0.6"/></g>
<path d="M833.3 492.6H837.4" fill="none" stroke="#5a5a5a" stroke-width="0.8"/>
<rect x="841" y="492.7" width="61" height="0.9" fill="#a9a9a9"/>
<rect x="871.1" y="491.2" width="0.7" height="3.9" fill="#8a8a8a"/>
<rect x="861.8" y="489.5" width="3.1" height="6.8" fill="#3e3e3e" rx="0.5"/>
<path d="M905.1 492.6H909.5M907.3 490.4V494.8" fill="none" stroke="#5a5a5a" stroke-width="0.8"/>
</svg>
<div id="labels">
<!-- window chrome backgrounds -->
<!-- worksheet -->
<span style="transform:translate(51.47px,124.5px) rotate(.03deg) scaleX(0.860);font-size:5.7px;color:#333;-webkit-text-stroke:0.3px;">A</span>
<span style="transform:translate(110.87px,124.5px) rotate(.03deg) scaleX(0.860);font-size:5.7px;color:#333;-webkit-text-stroke:0.3px;">B</span>
<span style="transform:translate(157.18px,124.5px) rotate(.03deg) scaleX(0.860);font-size:5.7px;color:#333;-webkit-text-stroke:0.3px;">C</span>
<span style="transform:translate(205.58px,124.5px) rotate(.03deg) scaleX(0.860);font-size:5.7px;color:#333;-webkit-text-stroke:0.3px;">D</span>
<span style="transform:translate(262.22px,124.5px) rotate(.03deg) scaleX(0.860);font-size:5.7px;color:#333;-webkit-text-stroke:0.3px;">E</span>
<span style="transform:translate(318.5px,124.5px) rotate(.03deg) scaleX(0.860);font-size:5.7px;color:#333;-webkit-text-stroke:0.3px;">F</span>
<span style="transform:translate(375.94px,124.5px) rotate(.03deg) scaleX(0.860);font-size:5.7px;color:#333;-webkit-text-stroke:0.3px;">G</span>
<span style="transform:translate(458.58px,124.5px) rotate(.03deg) scaleX(0.860);font-size:5.7px;color:#333;-webkit-text-stroke:0.3px;">H</span>
<span style="transform:translate(509.16px,124.5px) rotate(.03deg) scaleX(0.860);font-size:5.7px;color:#333;-webkit-text-stroke:0.3px;">I</span>
<span style="transform:translate(541.63px,124.5px) rotate(.03deg) scaleX(0.860);font-size:5.7px;color:#333;-webkit-text-stroke:0.3px;">J</span>
<span style="transform:translate(595.37px,124.5px) rotate(.03deg) scaleX(0.860);font-size:5.7px;color:#333;-webkit-text-stroke:0.3px;">K</span>
<span style="transform:translate(649.99px,124.5px) rotate(.03deg) scaleX(0.860);font-size:5.7px;color:#333;-webkit-text-stroke:0.3px;">L</span>
<span style="transform:translate(682.41px,124.5px) rotate(.03deg) scaleX(0.860);font-size:5.7px;color:#333;-webkit-text-stroke:0.3px;">M</span>
<span style="transform:translate(727.43px,124.5px) rotate(.03deg) scaleX(0.860);font-size:5.7px;color:#333;-webkit-text-stroke:0.3px;">N</span>
<span style="transform:translate(772.19px,124.5px) rotate(.03deg) scaleX(0.860);font-size:5.7px;color:#333;-webkit-text-stroke:0.3px;">O</span>
<span style="transform:translate(801.87px,124.5px) rotate(.03deg) scaleX(0.860);font-size:5.7px;color:#333;-webkit-text-stroke:0.3px;">P</span>
<span style="transform:translate(847.94px,124.5px) rotate(.03deg) scaleX(0.860);font-size:5.7px;color:#333;-webkit-text-stroke:0.3px;">Q</span>
<span style="transform:translate(894.63px,124.5px) rotate(.03deg) scaleX(0.860);font-size:5.7px;color:#333;-webkit-text-stroke:0.3px;">R</span>
<span style="transform:translate(4.45px,138.9px) rotate(.03deg);font-size:6.1px;color:#333;-webkit-text-stroke:0.25px;">1</span>
<span style="transform:translate(4.45px,163.5px) rotate(.03deg);font-size:6.1px;color:#333;-webkit-text-stroke:0.25px;">2</span>
<span style="transform:translate(4.45px,172.2px) rotate(.03deg);font-size:6.1px;color:#333;-webkit-text-stroke:0.25px;">3</span>
<span style="transform:translate(4.45px,181.1px) rotate(.03deg);font-size:6.1px;color:#333;-webkit-text-stroke:0.25px;">4</span>
<span style="transform:translate(4.45px,196.3px) rotate(.03deg);font-size:6.1px;color:#333;-webkit-text-stroke:0.25px;">5</span>
<span style="transform:translate(4.45px,205px) rotate(.03deg);font-size:6.1px;color:#333;-webkit-text-stroke:0.25px;">6</span>
<span style="transform:translate(4.45px,213.8px) rotate(.03deg);font-size:6.1px;color:#333;-webkit-text-stroke:0.25px;">7</span>
<span style="transform:translate(4.45px,222.59px) rotate(.03deg);font-size:6.1px;color:#333;-webkit-text-stroke:0.25px;">8</span>
<span style="transform:translate(4.45px,231.39px) rotate(.03deg);font-size:6.1px;color:#333;-webkit-text-stroke:0.25px;">9</span>
<span style="transform:translate(2.76px,240.19px) rotate(.03deg);font-size:6.1px;color:#333;-webkit-text-stroke:0.25px;">10</span>
<span style="transform:translate(2.99px,248.99px) rotate(.03deg);font-size:6.1px;color:#333;-webkit-text-stroke:0.25px;">11</span>
<span style="transform:translate(2.76px,257.78px) rotate(.03deg);font-size:6.1px;color:#333;-webkit-text-stroke:0.25px;">12</span>
<span style="transform:translate(2.76px,266.58px) rotate(.03deg);font-size:6.1px;color:#333;-webkit-text-stroke:0.25px;">13</span>
<span style="transform:translate(2.76px,275.38px) rotate(.03deg);font-size:6.1px;color:#333;-webkit-text-stroke:0.25px;">14</span>
<span style="transform:translate(2.76px,284.17px) rotate(.03deg);font-size:6.1px;color:#333;-webkit-text-stroke:0.25px;">15</span>
<span style="transform:translate(2.76px,292.97px) rotate(.03deg);font-size:6.1px;color:#333;-webkit-text-stroke:0.25px;">16</span>
<span style="transform:translate(2.76px,301.77px) rotate(.03deg);font-size:6.1px;color:#333;-webkit-text-stroke:0.25px;">17</span>
<span style="transform:translate(2.76px,310.56px) rotate(.03deg);font-size:6.1px;color:#333;-webkit-text-stroke:0.25px;">18</span>
<span style="transform:translate(2.76px,319.36px) rotate(.03deg);font-size:6.1px;color:#333;-webkit-text-stroke:0.25px;">19</span>
<span style="transform:translate(2.76px,328.16px) rotate(.03deg);font-size:6.1px;color:#333;-webkit-text-stroke:0.25px;">20</span>
<span style="transform:translate(2.76px,336.95px) rotate(.03deg);font-size:6.1px;color:#333;-webkit-text-stroke:0.25px;">21</span>
<span style="transform:translate(2.76px,345.75px) rotate(.03deg);font-size:6.1px;color:#333;-webkit-text-stroke:0.25px;">22</span>
<span style="transform:translate(2.76px,354.55px) rotate(.03deg);font-size:6.1px;color:#333;-webkit-text-stroke:0.25px;">23</span>
<span style="transform:translate(2.76px,363.35px) rotate(.03deg);font-size:6.1px;color:#333;-webkit-text-stroke:0.25px;">24</span>
<span style="transform:translate(2.76px,372.14px) rotate(.03deg);font-size:6.1px;color:#333;-webkit-text-stroke:0.25px;">25</span>
<span style="transform:translate(2.76px,380.94px) rotate(.03deg);font-size:6.1px;color:#333;-webkit-text-stroke:0.25px;">26</span>
<span style="transform:translate(2.76px,389.74px) rotate(.03deg);font-size:6.1px;color:#333;-webkit-text-stroke:0.25px;">27</span>
<span style="transform:translate(2.76px,398.53px) rotate(.03deg);font-size:6.1px;color:#333;-webkit-text-stroke:0.25px;">28</span>
<span style="transform:translate(2.76px,407.33px) rotate(.03deg);font-size:6.1px;color:#333;-webkit-text-stroke:0.25px;">29</span>
<span style="transform:translate(2.76px,416.13px) rotate(.03deg);font-size:6.1px;color:#333;-webkit-text-stroke:0.25px;">30</span>
<span style="transform:translate(2.76px,424.93px) rotate(.03deg);font-size:6.1px;color:#333;-webkit-text-stroke:0.25px;">31</span>
<span style="transform:translate(2.76px,433.72px) rotate(.03deg);font-size:6.1px;color:#333;-webkit-text-stroke:0.25px;">32</span>
<span style="transform:translate(2.76px,442.52px) rotate(.03deg);font-size:6.1px;color:#333;-webkit-text-stroke:0.25px;">33</span>
<span style="transform:translate(2.76px,451.32px) rotate(.03deg);font-size:6.1px;color:#333;-webkit-text-stroke:0.25px;">34</span>
<span style="transform:translate(2.76px,460.11px) rotate(.03deg);font-size:6.1px;color:#333;-webkit-text-stroke:0.25px;">35</span>
<span style="transform:translate(12.5px,129.5px) rotate(.03deg);font-size:14.9px;font-weight:700;letter-spacing:0.095px;color:#131b2d;-webkit-text-stroke:0.1px;">eqvista</span>
<span style="transform:translate(20px,156px) rotate(.03deg);font-size:6px;letter-spacing:-0.214px;color:#7584a3;-webkit-text-stroke:0.25px;">TRANSACTION DETAIL</span>
<span style="transform:translate(13.8px,172.6px) rotate(.03deg);font-size:6.1px;font-weight:700;letter-spacing:-0.044px;color:#1a1a1a;-webkit-text-stroke:0.1px;">Period: Nov 01, 2025 to Dec 31, 2025</span>
<span style="transform:translate(13.8px,193.75px) rotate(.03deg);font-size:6.1px;font-weight:700;letter-spacing:-0.050px;color:#1a1a1a;-webkit-text-stroke:0.1px;">General details</span>
<span style="transform:translate(514.4px,193.75px) rotate(.03deg);font-size:6.1px;font-weight:700;letter-spacing:-0.148px;color:#1a1a1a;-webkit-text-stroke:0.1px;">Begin balances</span>
<span style="transform:translate(688.9px,193.75px) rotate(.03deg);font-size:6.1px;font-weight:700;letter-spacing:-0.016px;color:#1a1a1a;-webkit-text-stroke:0.1px;">Vesting transactions</span>
<span style="transform:translate(778.7px,193.75px) rotate(.03deg);font-size:6.1px;font-weight:700;letter-spacing:-0.152px;color:#1a1a1a;-webkit-text-stroke:0.1px;">End Balances</span>
<span style="transform:translate(13.8px,205px) rotate(.03deg);font-size:6.1px;letter-spacing:-0.020px;color:#eceef2;-webkit-text-stroke:0.05px;">Shareholder</span>
<span style="transform:translate(93.8px,205px) rotate(.03deg);font-size:6.1px;letter-spacing:0.027px;color:#eceef2;-webkit-text-stroke:0.05px;">Type</span>
<span style="transform:translate(132.6px,205px) rotate(.03deg) scaleX(0.946);font-size:6.1px;letter-spacing:-0.244px;color:#eceef2;-webkit-text-stroke:0.05px;">Class</span>
<span style="transform:translate(186.7px,205px) rotate(.03deg);font-size:6.1px;letter-spacing:0.124px;color:#eceef2;-webkit-text-stroke:0.05px;">Grant name</span>
<span style="transform:translate(229.4px,205px) rotate(.03deg);font-size:6.1px;letter-spacing:-0.056px;color:#eceef2;-webkit-text-stroke:0.05px;">Status</span>
<span style="transform:translate(299.7px,205px) rotate(.03deg);font-size:6.1px;letter-spacing:-0.069px;color:#eceef2;-webkit-text-stroke:0.05px;">Issue date</span>
<span style="transform:translate(341.7px,205px) rotate(.03deg);font-size:6.1px;letter-spacing:0.111px;color:#eceef2;-webkit-text-stroke:0.05px;">Vesting start Date</span>
<span style="transform:translate(415.4px,205px) rotate(.03deg);font-size:6.1px;letter-spacing:-0.019px;color:#eceef2;-webkit-text-stroke:0.05px;">Vesting schedule</span>
<span style="transform:translate(514.4px,205px) rotate(.03deg);font-size:6.1px;letter-spacing:-0.071px;color:#eceef2;-webkit-text-stroke:0.05px;">Begin shares</span>
<span style="transform:translate(572.7px,205px) rotate(.03deg);font-size:6.1px;letter-spacing:-0.021px;color:#eceef2;-webkit-text-stroke:0.05px;">Begin vested</span>
<span style="transform:translate(622.7px,205px) rotate(.03deg);font-size:6.1px;color:#eceef2;-webkit-text-stroke:0.05px;">Begin unvested</span>
<span style="transform:translate(688.9px,205px) rotate(.03deg);font-size:6.1px;letter-spacing:0.110px;color:#eceef2;-webkit-text-stroke:0.05px;">Vested during period</span>
<span style="transform:translate(778.7px,205px) rotate(.03deg);font-size:6.1px;letter-spacing:-0.148px;color:#eceef2;-webkit-text-stroke:0.05px;">End shares</span>
<span style="transform:translate(829.7px,205px) rotate(.03deg);font-size:6.1px;letter-spacing:-0.111px;color:#eceef2;-webkit-text-stroke:0.05px;">End vested</span>
<span style="transform:translate(871.4px,205px) rotate(.03deg);font-size:6.1px;letter-spacing:-0.026px;color:#eceef2;-webkit-text-stroke:0.05px;">End unvested</span>
<span style="transform:translate(13.8px,214px) rotate(.03deg);font-size:6.1px;letter-spacing:-0.017px;color:#2b2b2b;-webkit-text-stroke:0.12px;">Robert Lee</span>
<span style="transform:translate(93.8px,214px) rotate(.03deg);font-size:6.1px;letter-spacing:-0.087px;color:#2b2b2b;-webkit-text-stroke:0.12px;">Common</span>
<span style="transform:translate(132.6px,214px) rotate(.03deg);font-size:6.1px;letter-spacing:-0.136px;color:#2b2b2b;-webkit-text-stroke:0.12px;">Founders</span>
<span style="transform:translate(186.7px,214px) rotate(.03deg);font-size:6.1px;letter-spacing:-0.230px;color:#2b2b2b;-webkit-text-stroke:0.12px;">F-004</span>
<span style="transform:translate(229.4px,214px) rotate(.03deg);font-size:6.1px;letter-spacing:0.038px;color:#2b2b2b;-webkit-text-stroke:0.12px;">Active</span>
<span style="transform:translate(299.7px,214px) rotate(.03deg);font-size:6.1px;color:#2b2b2b;-webkit-text-stroke:0.12px;">12-15-2025</span>
<span style="transform:translate(341.7px,214px) rotate(.03deg);font-size:6.1px;letter-spacing:-0.019px;color:#2b2b2b;-webkit-text-stroke:0.12px;">01-01-2025</span>
<span style="transform:translate(415.4px,214px) rotate(.03deg);font-size:6.1px;letter-spacing:0.142px;color:#2b2b2b;-webkit-text-stroke:0.12px;">1/48 monthly, no cliff</span>
<span style="transform:translate(545.9px,214px) rotate(.03deg);font-size:6.1px;letter-spacing:0.067px;color:#2b2b2b;-webkit-text-stroke:0.12px;">1,000.00</span>
<span style="transform:translate(601.15px,214px) rotate(.03deg);font-size:6.1px;letter-spacing:0.062px;color:#2b2b2b;-webkit-text-stroke:0.12px;">208.33</span>
<span style="transform:translate(659.85px,214px) rotate(.03deg);font-size:6.1px;letter-spacing:0.062px;color:#2b2b2b;-webkit-text-stroke:0.12px;">791.67</span>
<span style="transform:translate(752.85px,214px) rotate(.03deg);font-size:6.1px;letter-spacing:0.050px;color:#2b2b2b;-webkit-text-stroke:0.12px;">41.67</span>
<span style="transform:translate(802.9px,214px) rotate(.03deg);font-size:6.1px;letter-spacing:0.067px;color:#2b2b2b;-webkit-text-stroke:0.12px;">1,000.00</span>
<span style="transform:translate(849.85px,214px) rotate(.03deg);font-size:6.1px;letter-spacing:0.062px;color:#2b2b2b;-webkit-text-stroke:0.12px;">250.00</span>
<span style="transform:translate(901.25px,214px) rotate(.03deg);font-size:6.1px;letter-spacing:0.062px;color:#2b2b2b;-webkit-text-stroke:0.12px;">750.00</span>
<span style="transform:translate(13.8px,222.79px) rotate(.03deg);font-size:6.1px;letter-spacing:-0.191px;color:#2b2b2b;-webkit-text-stroke:0.12px;">Rosa Francis</span>
<span style="transform:translate(93.8px,222.79px) rotate(.03deg);font-size:6.1px;letter-spacing:-0.087px;color:#2b2b2b;-webkit-text-stroke:0.12px;">Common</span>
<span style="transform:translate(132.6px,222.79px) rotate(.03deg);font-size:6.1px;letter-spacing:-0.100px;color:#2b2b2b;-webkit-text-stroke:0.12px;">Series A</span>
<span style="transform:translate(186.7px,222.79px) rotate(.03deg);font-size:6.1px;letter-spacing:-0.206px;color:#2b2b2b;-webkit-text-stroke:0.12px;">SA-002</span>
<span style="transform:translate(229.4px,222.79px) rotate(.03deg);font-size:6.1px;letter-spacing:0.038px;color:#2b2b2b;-webkit-text-stroke:0.12px;">Active</span>
<span style="transform:translate(299.7px,222.79px) rotate(.03deg);font-size:6.1px;color:#2b2b2b;-webkit-text-stroke:0.12px;">02-01-2025</span>
<span style="transform:translate(341.7px,222.79px) rotate(.03deg);font-size:6.1px;letter-spacing:-0.019px;color:#2b2b2b;-webkit-text-stroke:0.12px;">01-01-2025</span>
<span style="transform:translate(415.4px,222.79px) rotate(.03deg);font-size:6.1px;letter-spacing:0.113px;color:#2b2b2b;-webkit-text-stroke:0.12px;">1/48 monthly, 1 year cliff</span>
<span style="transform:translate(545.9px,222.79px) rotate(.03deg);font-size:6.1px;letter-spacing:0.067px;color:#2b2b2b;-webkit-text-stroke:0.12px;">1,000.00</span>
<span style="transform:translate(608.15px,222.79px) rotate(.03deg);font-size:6.1px;letter-spacing:0.025px;color:#2b2b2b;-webkit-text-stroke:0.12px;">0.00</span>
<span style="transform:translate(654.6px,222.79px) rotate(.03deg);font-size:6.1px;letter-spacing:0.067px;color:#2b2b2b;-webkit-text-stroke:0.12px;">1,000.00</span>
<span style="transform:translate(749.35px,222.79px) rotate(.03deg);font-size:6.1px;letter-spacing:0.062px;color:#2b2b2b;-webkit-text-stroke:0.12px;">250.00</span>
<span style="transform:translate(802.9px,222.79px) rotate(.03deg);font-size:6.1px;letter-spacing:0.067px;color:#2b2b2b;-webkit-text-stroke:0.12px;">1,000.00</span>
<span style="transform:translate(849.85px,222.79px) rotate(.03deg);font-size:6.1px;letter-spacing:0.062px;color:#2b2b2b;-webkit-text-stroke:0.12px;">250.00</span>
<span style="transform:translate(901.25px,222.79px) rotate(.03deg);font-size:6.1px;letter-spacing:0.062px;color:#2b2b2b;-webkit-text-stroke:0.12px;">750.00</span>
<span style="transform:translate(13.8px,231.59px) rotate(.03deg);font-size:6.1px;letter-spacing:0.052px;color:#2b2b2b;-webkit-text-stroke:0.12px;">Steve Mark</span>
<span style="transform:translate(93.8px,231.59px) rotate(.03deg);font-size:6.1px;letter-spacing:0.112px;color:#2b2b2b;-webkit-text-stroke:0.12px;">Preferred</span>
<span style="transform:translate(132.6px,231.59px) rotate(.03deg);font-size:6.1px;letter-spacing:-0.219px;color:#2b2b2b;-webkit-text-stroke:0.12px;">Series B</span>
<span style="transform:translate(186.7px,231.59px) rotate(.03deg);font-size:6.1px;letter-spacing:-0.206px;color:#2b2b2b;-webkit-text-stroke:0.12px;">SB-003</span>
<span style="transform:translate(229.4px,231.59px) rotate(.03deg);font-size:6.1px;letter-spacing:0.038px;color:#2b2b2b;-webkit-text-stroke:0.12px;">Active</span>
<span style="transform:translate(299.7px,231.59px) rotate(.03deg);font-size:6.1px;color:#2b2b2b;-webkit-text-stroke:0.12px;">03-01-2025</span>
<span style="transform:translate(341.7px,231.59px) rotate(.03deg);font-size:6.1px;letter-spacing:-0.019px;color:#2b2b2b;-webkit-text-stroke:0.12px;">01-01-2025</span>
<span style="transform:translate(415.4px,231.59px) rotate(.03deg);font-size:6.1px;letter-spacing:0.142px;color:#2b2b2b;-webkit-text-stroke:0.12px;">1/24 monthly, no cliff</span>
<span style="transform:translate(545.9px,231.59px) rotate(.03deg);font-size:6.1px;letter-spacing:0.067px;color:#2b2b2b;-webkit-text-stroke:0.12px;">1,000.00</span>
<span style="transform:translate(601.15px,231.59px) rotate(.03deg);font-size:6.1px;letter-spacing:0.062px;color:#2b2b2b;-webkit-text-stroke:0.12px;">416.67</span>
<span style="transform:translate(659.85px,231.59px) rotate(.03deg);font-size:6.1px;letter-spacing:0.062px;color:#2b2b2b;-webkit-text-stroke:0.12px;">583.33</span>
<span style="transform:translate(752.85px,231.59px) rotate(.03deg);font-size:6.1px;letter-spacing:0.050px;color:#2b2b2b;-webkit-text-stroke:0.12px;">83.33</span>
<span style="transform:translate(802.9px,231.59px) rotate(.03deg);font-size:6.1px;letter-spacing:0.067px;color:#2b2b2b;-webkit-text-stroke:0.12px;">1,000.00</span>
<span style="transform:translate(849.85px,231.59px) rotate(.03deg);font-size:6.1px;letter-spacing:0.062px;color:#2b2b2b;-webkit-text-stroke:0.12px;">500.00</span>
<span style="transform:translate(901.25px,231.59px) rotate(.03deg);font-size:6.1px;letter-spacing:0.062px;color:#2b2b2b;-webkit-text-stroke:0.12px;">500.00</span>
<span style="transform:translate(13.8px,240.39px) rotate(.03deg);font-size:6.1px;letter-spacing:-0.080px;color:#2b2b2b;-webkit-text-stroke:0.12px;">Louis Richard</span>
<span style="transform:translate(93.8px,240.39px) rotate(.03deg);font-size:6.1px;letter-spacing:0.066px;color:#2b2b2b;-webkit-text-stroke:0.12px;">Option</span>
<span style="transform:translate(132.6px,240.39px) rotate(.03deg);font-size:6.1px;letter-spacing:-0.036px;color:#2b2b2b;-webkit-text-stroke:0.12px;">Option Pool 1</span>
<span style="transform:translate(186.7px,240.39px) rotate(.03deg);font-size:6.1px;letter-spacing:-0.243px;color:#2b2b2b;-webkit-text-stroke:0.12px;">SO-002</span>
<span style="transform:translate(229.4px,240.39px) rotate(.03deg);font-size:6.1px;letter-spacing:-0.019px;color:#2b2b2b;-webkit-text-stroke:0.12px;">Partially Canceled</span>
<span style="transform:translate(299.7px,240.39px) rotate(.03deg);font-size:6.1px;color:#2b2b2b;-webkit-text-stroke:0.12px;">02-01-2025</span>
<span style="transform:translate(341.7px,240.39px) rotate(.03deg);font-size:6.1px;letter-spacing:-0.019px;color:#2b2b2b;-webkit-text-stroke:0.12px;">01-01-2025</span>
<span style="transform:translate(415.4px,240.39px) rotate(.03deg);font-size:6.1px;letter-spacing:0.142px;color:#2b2b2b;-webkit-text-stroke:0.12px;">1/36 monthly, no cliff</span>
<span style="transform:translate(558.15px,240.39px) rotate(.03deg);font-size:6.1px;letter-spacing:0.025px;color:#2b2b2b;-webkit-text-stroke:0.12px;">1.16</span>
<span style="transform:translate(608.15px,240.39px) rotate(.03deg);font-size:6.1px;letter-spacing:0.025px;color:#2b2b2b;-webkit-text-stroke:0.12px;">1.16</span>
<span style="transform:translate(666.85px,240.39px) rotate(.03deg);font-size:6.1px;letter-spacing:0.025px;color:#2b2b2b;-webkit-text-stroke:0.12px;">0.00</span>
<span style="transform:translate(756.35px,240.39px) rotate(.03deg);font-size:6.1px;letter-spacing:0.025px;color:#2b2b2b;-webkit-text-stroke:0.12px;">0.00</span>
<span style="transform:translate(815.15px,240.39px) rotate(.03deg);font-size:6.1px;letter-spacing:0.025px;color:#2b2b2b;-webkit-text-stroke:0.12px;">1.16</span>
<span style="transform:translate(856.85px,240.39px) rotate(.03deg);font-size:6.1px;letter-spacing:0.025px;color:#2b2b2b;-webkit-text-stroke:0.12px;">1.16</span>
<span style="transform:translate(908.25px,240.39px) rotate(.03deg);font-size:6.1px;letter-spacing:0.025px;color:#2b2b2b;-webkit-text-stroke:0.12px;">0.00</span>
<span style="transform:translate(13.8px,249.19px) rotate(.03deg);font-size:6.1px;letter-spacing:-0.080px;color:#2b2b2b;-webkit-text-stroke:0.12px;">Louis Richard</span>
<span style="transform:translate(93.8px,249.19px) rotate(.03deg);font-size:6.1px;letter-spacing:0.066px;color:#2b2b2b;-webkit-text-stroke:0.12px;">Option</span>
<span style="transform:translate(132.6px,249.19px) rotate(.03deg);font-size:6.1px;letter-spacing:-0.036px;color:#2b2b2b;-webkit-text-stroke:0.12px;">Option Pool 2</span>
<span style="transform:translate(186.7px,249.19px) rotate(.03deg);font-size:6.1px;letter-spacing:-0.182px;color:#2b2b2b;-webkit-text-stroke:0.12px;">OP2-002</span>
<span style="transform:translate(229.4px,249.19px) rotate(.03deg);font-size:6.1px;letter-spacing:0.038px;color:#2b2b2b;-webkit-text-stroke:0.12px;">Active</span>
<span style="transform:translate(299.7px,249.19px) rotate(.03deg);font-size:6.1px;color:#2b2b2b;-webkit-text-stroke:0.12px;">07-30-2025</span>
<span style="transform:translate(341.7px,249.19px) rotate(.03deg);font-size:6.1px;letter-spacing:-0.019px;color:#2b2b2b;-webkit-text-stroke:0.12px;">01-01-2025</span>
<span style="transform:translate(415.4px,249.19px) rotate(.03deg);font-size:6.1px;letter-spacing:0.142px;color:#2b2b2b;-webkit-text-stroke:0.12px;">1/48 monthly, no cliff</span>
<span style="transform:translate(545.9px,249.19px) rotate(.03deg);font-size:6.1px;letter-spacing:0.067px;color:#2b2b2b;-webkit-text-stroke:0.12px;">1,000.00</span>
<span style="transform:translate(601.15px,249.19px) rotate(.03deg);font-size:6.1px;letter-spacing:0.062px;color:#2b2b2b;-webkit-text-stroke:0.12px;">208.33</span>
<span style="transform:translate(659.85px,249.19px) rotate(.03deg);font-size:6.1px;letter-spacing:0.062px;color:#2b2b2b;-webkit-text-stroke:0.12px;">791.67</span>
<span style="transform:translate(752.85px,249.19px) rotate(.03deg);font-size:6.1px;letter-spacing:0.050px;color:#2b2b2b;-webkit-text-stroke:0.12px;">41.67</span>
<span style="transform:translate(802.9px,249.19px) rotate(.03deg);font-size:6.1px;letter-spacing:0.067px;color:#2b2b2b;-webkit-text-stroke:0.12px;">1,000.00</span>
<span style="transform:translate(849.85px,249.19px) rotate(.03deg);font-size:6.1px;letter-spacing:0.062px;color:#2b2b2b;-webkit-text-stroke:0.12px;">250.00</span>
<span style="transform:translate(901.25px,249.19px) rotate(.03deg);font-size:6.1px;letter-spacing:0.062px;color:#2b2b2b;-webkit-text-stroke:0.12px;">750.00</span>
<span style="transform:translate(13.8px,257.98px) rotate(.03deg);font-size:6.1px;letter-spacing:-0.080px;color:#2b2b2b;-webkit-text-stroke:0.12px;">Louis Richard</span>
<span style="transform:translate(93.8px,257.98px) rotate(.03deg);font-size:6.1px;letter-spacing:0.066px;color:#2b2b2b;-webkit-text-stroke:0.12px;">Option</span>
<span style="transform:translate(132.6px,257.98px) rotate(.03deg);font-size:6.1px;letter-spacing:-0.036px;color:#2b2b2b;-webkit-text-stroke:0.12px;">Option Pool 2</span>
<span style="transform:translate(186.7px,257.98px) rotate(.03deg);font-size:6.1px;letter-spacing:-0.182px;color:#2b2b2b;-webkit-text-stroke:0.12px;">OP2-003</span>
<span style="transform:translate(229.4px,257.98px) rotate(.03deg);font-size:6.1px;letter-spacing:0.038px;color:#2b2b2b;-webkit-text-stroke:0.12px;">Active</span>
<span style="transform:translate(299.7px,257.98px) rotate(.03deg);font-size:6.1px;color:#2b2b2b;-webkit-text-stroke:0.12px;">01-01-2026</span>
<span style="transform:translate(341.7px,257.98px) rotate(.03deg);font-size:6.1px;letter-spacing:-0.019px;color:#2b2b2b;-webkit-text-stroke:0.12px;">01-01-2025</span>
<span style="transform:translate(415.4px,257.98px) rotate(.03deg);font-size:6.1px;letter-spacing:0.113px;color:#2b2b2b;-webkit-text-stroke:0.12px;">1/36 monthly, 1 year cliff</span>
<span style="transform:translate(545.9px,257.98px) rotate(.03deg);font-size:6.1px;letter-spacing:0.067px;color:#2b2b2b;-webkit-text-stroke:0.12px;">1,000.00</span>
<span style="transform:translate(608.15px,257.98px) rotate(.03deg);font-size:6.1px;letter-spacing:0.025px;color:#2b2b2b;-webkit-text-stroke:0.12px;">0.00</span>
<span style="transform:translate(654.6px,257.98px) rotate(.03deg);font-size:6.1px;letter-spacing:0.067px;color:#2b2b2b;-webkit-text-stroke:0.12px;">1,000.00</span>
<span style="transform:translate(749.35px,257.98px) rotate(.03deg);font-size:6.1px;letter-spacing:0.062px;color:#2b2b2b;-webkit-text-stroke:0.12px;">333.33</span>
<span style="transform:translate(802.9px,257.98px) rotate(.03deg);font-size:6.1px;letter-spacing:0.067px;color:#2b2b2b;-webkit-text-stroke:0.12px;">1,000.00</span>
<span style="transform:translate(849.85px,257.98px) rotate(.03deg);font-size:6.1px;letter-spacing:0.062px;color:#2b2b2b;-webkit-text-stroke:0.12px;">333.33</span>
<span style="transform:translate(901.25px,257.98px) rotate(.03deg);font-size:6.1px;letter-spacing:0.062px;color:#2b2b2b;-webkit-text-stroke:0.12px;">666.67</span>
<span style="transform:translate(13.8px,266.78px) rotate(.03deg);font-size:6.1px;letter-spacing:-0.009px;color:#2b2b2b;-webkit-text-stroke:0.12px;">Alex Will</span>
<span style="transform:translate(93.8px,266.78px) rotate(.03deg);font-size:6.1px;letter-spacing:0.244px;color:#2b2b2b;-webkit-text-stroke:0.12px;">Warrant</span>
<span style="transform:translate(132.6px,266.78px) rotate(.03deg);font-size:6.1px;letter-spacing:0.120px;color:#2b2b2b;-webkit-text-stroke:0.12px;">Warrants A</span>
<span style="transform:translate(186.7px,266.78px) rotate(.03deg);font-size:6.1px;color:#2b2b2b;-webkit-text-stroke:0.12px;">WA-002</span>
<span style="transform:translate(229.4px,266.78px) rotate(.03deg);font-size:6.1px;letter-spacing:0.038px;color:#2b2b2b;-webkit-text-stroke:0.12px;">Active</span>
<span style="transform:translate(299.7px,266.78px) rotate(.03deg);font-size:6.1px;color:#2b2b2b;-webkit-text-stroke:0.12px;">02-01-2025</span>
<span style="transform:translate(341.7px,266.78px) rotate(.03deg);font-size:6.1px;letter-spacing:-0.019px;color:#2b2b2b;-webkit-text-stroke:0.12px;">01-01-2025</span>
<span style="transform:translate(415.4px,266.78px) rotate(.03deg);font-size:6.1px;letter-spacing:0.142px;color:#2b2b2b;-webkit-text-stroke:0.12px;">1/48 monthly, no cliff</span>
<span style="transform:translate(545.9px,266.78px) rotate(.03deg);font-size:6.1px;letter-spacing:0.067px;color:#2b2b2b;-webkit-text-stroke:0.12px;">1,000.00</span>
<span style="transform:translate(601.15px,266.78px) rotate(.03deg);font-size:6.1px;letter-spacing:0.062px;color:#2b2b2b;-webkit-text-stroke:0.12px;">208.33</span>
<span style="transform:translate(659.85px,266.78px) rotate(.03deg);font-size:6.1px;letter-spacing:0.062px;color:#2b2b2b;-webkit-text-stroke:0.12px;">791.67</span>
<span style="transform:translate(752.85px,266.78px) rotate(.03deg);font-size:6.1px;letter-spacing:0.050px;color:#2b2b2b;-webkit-text-stroke:0.12px;">41.67</span>
<span style="transform:translate(802.9px,266.78px) rotate(.03deg);font-size:6.1px;letter-spacing:0.067px;color:#2b2b2b;-webkit-text-stroke:0.12px;">1,000.00</span>
<span style="transform:translate(849.85px,266.78px) rotate(.03deg);font-size:6.1px;letter-spacing:0.062px;color:#2b2b2b;-webkit-text-stroke:0.12px;">250.00</span>
<span style="transform:translate(901.25px,266.78px) rotate(.03deg);font-size:6.1px;letter-spacing:0.062px;color:#2b2b2b;-webkit-text-stroke:0.12px;">750.00</span>
<!-- scrollbars -->
<!-- title bar -->
<span style="transform:translate(390.6px,7.1px) rotate(.03deg);font-size:7.2px;letter-spacing:-0.139px;color:#fff;-webkit-text-stroke:0.06px;">Tech Inc_Vesting_report_January 17, 2026  -  Excel</span>
<!-- ribbon tabs -->
<span style="transform:translate(12.1px,26.75px) rotate(.03deg);font-size:7.2px;letter-spacing:-0.131px;color:#fff;-webkit-text-stroke:0.06px;">File</span>
<span style="transform:translate(43px,26.75px) rotate(.03deg);font-size:7.2px;letter-spacing:0.271px;color:#2b7a50;">Home</span>
<span style="transform:translate(76.7px,26.75px) rotate(.03deg);font-size:7.2px;letter-spacing:-0.097px;color:#fff;-webkit-text-stroke:0.06px;">Insert</span>
<span style="transform:translate(107.8px,26.75px) rotate(.03deg);font-size:7.2px;letter-spacing:0.006px;color:#fff;-webkit-text-stroke:0.06px;">Draw</span>
<span style="transform:translate(138.5px,26.75px) rotate(.03deg);font-size:7.2px;letter-spacing:-0.128px;color:#fff;-webkit-text-stroke:0.06px;">Page Layout</span>
<span style="transform:translate(191.3px,26.75px) rotate(.03deg);font-size:7.2px;letter-spacing:-0.096px;color:#fff;-webkit-text-stroke:0.06px;">Formulas</span>
<span style="transform:translate(234px,26.75px) rotate(.03deg);font-size:7.2px;letter-spacing:0.137px;color:#fff;-webkit-text-stroke:0.06px;">Data</span>
<span style="transform:translate(263.8px,26.75px) rotate(.03deg);font-size:7.2px;letter-spacing:-0.116px;color:#fff;-webkit-text-stroke:0.06px;">Review</span>
<span style="transform:translate(300.5px,26.75px) rotate(.03deg);font-size:7.2px;letter-spacing:0.116px;color:#fff;-webkit-text-stroke:0.06px;">View</span>
<span style="transform:translate(329.5px,26.75px) rotate(.03deg);font-size:7.2px;letter-spacing:0.092px;color:#fff;-webkit-text-stroke:0.06px;">Developer</span>
<span style="transform:translate(377px,26.75px) rotate(.03deg);font-size:7.2px;letter-spacing:0.268px;color:#fff;-webkit-text-stroke:0.06px;">Help</span>
<span style="transform:translate(406.9px,26.75px) rotate(.03deg);font-size:7.2px;letter-spacing:0.136px;color:#fff;-webkit-text-stroke:0.06px;">Acrobat</span>
<span style="transform:translate(446.5px,26.75px) rotate(.03deg);font-size:7.2px;letter-spacing:-0.086px;color:#fff;-webkit-text-stroke:0.06px;">Power Pivot</span>
<span style="transform:translate(516.5px,26.75px) rotate(.03deg);font-size:7.2px;letter-spacing:0.127px;color:#fff;-webkit-text-stroke:0.06px;">Tell me what you want to do</span>
<span style="transform:translate(900.4px,27.5px) rotate(.03deg);font-size:7.6px;font-weight:700;letter-spacing:-0.127px;color:#fff;-webkit-text-stroke:0.1px;">Share</span>
<!-- ribbon -->
<span style="transform:translate(30.6px,87.75px) rotate(.03deg);font-size:6.5px;letter-spacing:0.009px;color:#4e4e4e;">Clipboard</span>
<span style="transform:translate(159.4px,87.75px) rotate(.03deg);font-size:6.5px;letter-spacing:-0.172px;color:#4e4e4e;">Font</span>
<span style="transform:translate(309.75px,87.75px) rotate(.03deg);font-size:6.5px;letter-spacing:-0.113px;color:#4e4e4e;">Alignment</span>
<span style="transform:translate(447.25px,87.75px) rotate(.03deg);font-size:6.5px;letter-spacing:0.125px;color:#4e4e4e;">Number</span>
<span style="transform:translate(562.75px,87.75px) rotate(.03deg) scaleX(0.991);font-size:6.5px;letter-spacing:-0.260px;color:#4e4e4e;">Styles</span>
<span style="transform:translate(666.25px,87.75px) rotate(.03deg) scaleX(0.980);font-size:6.5px;letter-spacing:-0.260px;color:#4e4e4e;">Cells</span>
<span style="transform:translate(770.6px,87.75px) rotate(.03deg);font-size:6.5px;letter-spacing:-0.079px;color:#4e4e4e;">Editing</span>
<span style="transform:translate(852.9px,87.75px) rotate(.03deg);font-size:6.5px;letter-spacing:-0.074px;color:#4e4e4e;">Add-ins</span>
<span style="transform:translate(886.25px,87.75px) rotate(.03deg);font-size:6.5px;letter-spacing:-0.160px;color:#4e4e4e;">Adobe Ac...</span>
<span style="transform:translate(9.75px,65.3px) rotate(.03deg) scaleX(0.937);font-size:7.2px;letter-spacing:-0.288px;color:#3a3a3a;">Paste</span>
<span style="transform:translate(44px,45.1px) rotate(.03deg);font-size:7.2px;letter-spacing:-0.288px;color:#3a3a3a;">Cut</span>
<span style="transform:translate(44px,59.2px) rotate(.03deg);font-size:7.2px;letter-spacing:-0.060px;color:#3a3a3a;">Copy</span>
<span style="transform:translate(44px,73.4px) rotate(.03deg);font-size:7.2px;letter-spacing:-0.042px;color:#3a3a3a;">Format Painter</span>
<span style="transform:translate(107.25px,50px) rotate(.03deg);font-size:7.2px;letter-spacing:0.079px;color:#3a3a3a;-webkit-text-stroke:0.08px;">Calibri</span>
<span style="transform:translate(178.75px,50px) rotate(.03deg) scaleX(0.954);font-size:7.2px;letter-spacing:-0.288px;color:#3a3a3a;-webkit-text-stroke:0.08px;">11</span>
<span style="transform:translate(424px,50px) rotate(.03deg);font-size:7.2px;letter-spacing:0.134px;color:#3a3a3a;-webkit-text-stroke:0.08px;">Number</span>
<span style="transform:translate(109.75px,69px) rotate(.03deg);font-size:8px;font-weight:700;color:#3a3a3a;-webkit-text-stroke:0.1px;">B</span>
<span style="transform:translate(125.6px,69px) rotate(.03deg);font-size:8.2px;font-weight:700;font-style:italic;font-family:'Liberation Serif',serif;color:#3a3a3a;-webkit-text-stroke:0.1px;">I</span>
<span style="transform:translate(138.5px,68.6px) rotate(.03deg);font-size:7.6px;color:#3a3a3a;">U</span>
<span style="transform:translate(341.25px,50px) rotate(.03deg);font-size:7.2px;letter-spacing:0.132px;color:#3a3a3a;">Wrap Text</span>
<span style="transform:translate(341.6px,69px) rotate(.03deg);font-size:7.2px;letter-spacing:0.059px;color:#3a3a3a;">Merge &amp; Center</span>
<span style="transform:translate(426.5px,68px) rotate(.03deg);font-size:8.6px;color:#3a3a3a;">$</span>
<span style="transform:translate(449px,68px) rotate(.03deg);font-size:8.6px;color:#3a3a3a;">%</span>
<span style="transform:translate(465.6px,63.8px) rotate(.03deg);font-size:11px;font-weight:700;font-family:'Liberation Serif',serif;color:#3a3a3a;-webkit-text-stroke:0.1px;">,</span>
<span style="transform:translate(521px,65.5px) rotate(.03deg);font-size:7.2px;letter-spacing:0.153px;color:#3a3a3a;">Conditional</span>
<span style="transform:translate(519px,75.3px) rotate(.03deg);font-size:7.2px;letter-spacing:0.071px;color:#3a3a3a;">Formatting</span>
<span style="transform:translate(564.4px,65.5px) rotate(.03deg);font-size:7.2px;letter-spacing:-0.064px;color:#3a3a3a;">Format as</span>
<span style="transform:translate(568.75px,75.3px) rotate(.03deg);font-size:7.2px;letter-spacing:-0.234px;color:#3a3a3a;">Table</span>
<span style="transform:translate(605px,65.5px) rotate(.03deg);font-size:7.2px;letter-spacing:0.036px;color:#3a3a3a;">Cell</span>
<span style="transform:translate(599px,75.3px) rotate(.03deg);font-size:7.2px;letter-spacing:-0.166px;color:#3a3a3a;">Styles</span>
<span style="transform:translate(639.75px,65.5px) rotate(.03deg);font-size:7.2px;letter-spacing:-0.097px;color:#3a3a3a;">Insert</span>
<span style="transform:translate(663.1px,65.5px) rotate(.03deg);font-size:7.2px;letter-spacing:0.104px;color:#3a3a3a;">Delete</span>
<span style="transform:translate(688.1px,65.5px) rotate(.03deg);font-size:7.2px;letter-spacing:-0.053px;color:#3a3a3a;">Format</span>
<span style="transform:translate(735.6px,45.1px) rotate(.03deg);font-size:7.2px;letter-spacing:-0.030px;color:#3a3a3a;">AutoSum</span>
<span style="transform:translate(736px,59.2px) rotate(.03deg);font-size:7.2px;letter-spacing:-0.146px;color:#3a3a3a;">Fill</span>
<span style="transform:translate(735.6px,73.4px) rotate(.03deg);font-size:7.2px;letter-spacing:-0.072px;color:#3a3a3a;">Clear</span>
<span style="transform:translate(787.5px,65.5px) rotate(.03deg);font-size:7.2px;letter-spacing:0.203px;color:#3a3a3a;">Sort &amp;</span>
<span style="transform:translate(786.9px,75.3px) rotate(.03deg);font-size:7.2px;letter-spacing:0.043px;color:#3a3a3a;">Filter</span>
<span style="transform:translate(815px,65.5px) rotate(.03deg);font-size:7.2px;letter-spacing:0.094px;color:#3a3a3a;">Find &amp;</span>
<span style="transform:translate(813.1px,75.3px) rotate(.03deg);font-size:7.2px;letter-spacing:-0.197px;color:#3a3a3a;">Select</span>
<span style="transform:translate(852px,65.5px) rotate(.03deg);font-size:7.2px;letter-spacing:0.104px;color:#3a3a3a;">Add-ins</span>
<span style="transform:translate(892.25px,65.5px) rotate(.03deg);font-size:7.2px;letter-spacing:-0.116px;color:#3a3a3a;">Create</span>
<span style="transform:translate(893.9px,75.3px) rotate(.03deg) scaleX(0.921);font-size:7.2px;letter-spacing:-0.288px;color:#3a3a3a;">a PDF</span>
<!-- formula bar -->
<span style="transform:translate(7px,105.9px) rotate(.03deg);font-size:7px;letter-spacing:0.106px;color:#505050;-webkit-text-stroke:0.08px;">L43</span>
<span style="transform:translate(134px,104.3px) rotate(.03deg);font-size:10.6px;font-style:italic;font-family:'Liberation Serif',serif;color:#4a4a4a;-webkit-text-stroke:0.15px;">f</span>
<span style="transform:translate(138px,106.7px) rotate(.03deg);font-size:7.4px;font-style:italic;font-family:'Liberation Serif',serif;color:#4a4a4a;-webkit-text-stroke:0.15px;">x</span>
<!-- sheet tabs -->
<span style="transform:translate(62.25px,473.75px) rotate(.03deg);font-size:8.2px;letter-spacing:0.099px;color:#686868;">Vesting Report</span>
<span style="transform:translate(131.25px,473.75px) rotate(.03deg);font-size:7.9px;font-weight:700;letter-spacing:0.178px;color:#257a4d;-webkit-text-stroke:0.1px;">Transaction Detail</span>
<!-- status bar -->
<span style="transform:translate(7px,490px) rotate(.03deg);font-size:6.5px;letter-spacing:-0.199px;color:#4a4a4a;">Ready</span>
<span style="transform:translate(34.5px,490px) rotate(.03deg);font-size:6.5px;letter-spacing:-0.176px;color:#4a4a4a;">Calculate</span>
<span style="transform:translate(103.5px,490px) rotate(.03deg);font-size:6.3px;font-weight:700;letter-spacing:-0.050px;color:#3a3a3a;-webkit-text-stroke:0.1px;">Accessibility: Investigate</span>
<span style="transform:translate(917.9px,490px) rotate(.03deg) scaleX(0.896);font-size:6.5px;letter-spacing:-0.260px;color:#4a4a4a;">75%</span>
<!-- icons -->
<span style="transform:translate(212.5px,49.2px) rotate(.03deg);font-size:8.6px;color:#3a3a3a;">A</span>
<span style="transform:translate(227px,50.2px) rotate(.03deg);font-size:7.6px;color:#3a3a3a;">A</span>
<span style="transform:translate(216.9px,67.7px) rotate(.03deg);font-size:8.2px;color:#3a3a3a;">A</span>
<span style="transform:translate(330.7px,49.3px) rotate(.03deg);font-size:4.6px;font-weight:700;-webkit-text-stroke:0.1px;">ab</span>
<span style="transform:translate(330.7px,53.6px) rotate(.03deg);font-size:4.6px;font-weight:700;-webkit-text-stroke:0.1px;">c</span>
<span style="transform:translate(485.5px,68.9px) rotate(.03deg);font-size:4px;font-weight:700;color:#555;-webkit-text-stroke:0.1px;">.0</span>
<span style="transform:translate(483.5px,73.2px) rotate(.03deg);font-size:4px;font-weight:700;color:#555;-webkit-text-stroke:0.1px;">.00</span>
<span style="transform:translate(498.7px,68.9px) rotate(.03deg);font-size:4px;font-weight:700;color:#555;-webkit-text-stroke:0.1px;">.00</span>
<span style="transform:translate(500.9px,73.2px) rotate(.03deg);font-size:4px;font-weight:700;color:#555;-webkit-text-stroke:0.1px;">.0</span>
<span style="transform:translate(725px,43.2px) rotate(.03deg) scaleX(1.120);font-size:10.6px;color:#3a3a3a;-webkit-text-stroke:0.1px;">Σ</span>
<span style="transform:translate(789.3px,44.3px) rotate(.03deg);font-size:9.4px;font-weight:700;color:#2e75b6;-webkit-text-stroke:0.1px;">A</span>
<span style="transform:translate(789.6px,52.3px) rotate(.03deg);font-size:9.4px;font-weight:700;color:#9a4fb5;-webkit-text-stroke:0.1px;">Z</span>
</div>
</div>
</body>
</html>
